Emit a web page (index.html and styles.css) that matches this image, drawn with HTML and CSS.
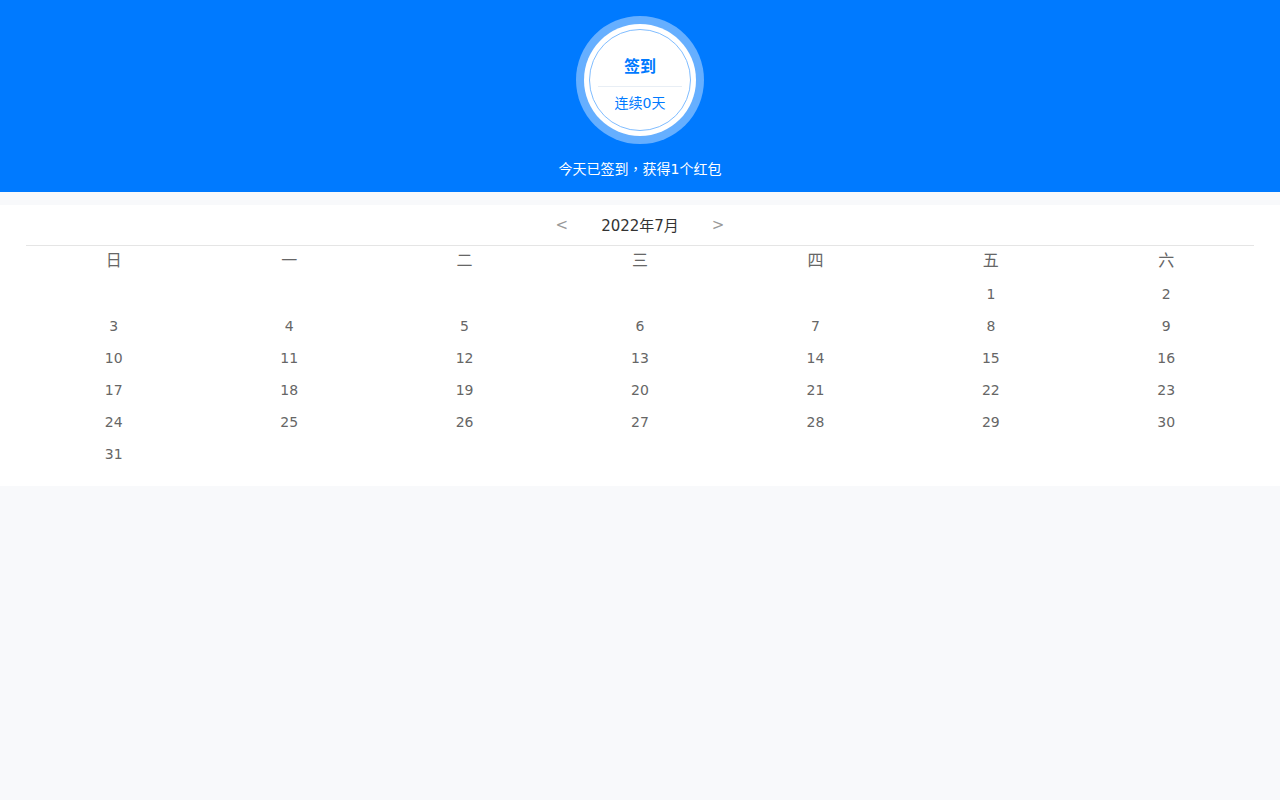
FILE: index.html
```html
<!DOCTYPE html>
<html lang="zh">
<head>
<meta charset="utf-8">
<title>签到</title>
<link rel="stylesheet" href="styles.css">
</head>
<body>
<header class="header">
  <div class="ring">
    <div class="disc">
      <div class="inner">
        <div class="sign-title">签到</div>
        <div class="divider"></div>
        <div class="streak">连续0天</div>
      </div>
    </div>
  </div>
  <div class="status" lang="zh-TW">今天已签到，获得1个红包</div>
</header>
<section class="card">
  <div class="nav">
    <span class="arrow">&lt;</span>
    <span class="month">2022年7月</span>
    <span class="arrow">&gt;</span>
  </div>
  <div class="grid weekdays">
    <div>日</div><div>一</div><div>二</div><div>三</div><div>四</div><div>五</div><div>六</div>
  </div>
  <div class="grid days">
    <div></div><div></div><div></div><div></div><div></div><div>1</div><div>2</div>
    <div>3</div><div>4</div><div>5</div><div>6</div><div>7</div><div>8</div><div>9</div>
    <div>10</div><div>11</div><div>12</div><div>13</div><div>14</div><div>15</div><div>16</div>
    <div>17</div><div>18</div><div>19</div><div>20</div><div>21</div><div>22</div><div>23</div>
    <div>24</div><div>25</div><div>26</div><div>27</div><div>28</div><div>29</div><div>30</div>
    <div>31</div><div></div><div></div><div></div><div></div><div></div><div></div>
  </div>
</section>
</body>
</html>
```
FILE: styles.css
```css
* { box-sizing: border-box; }
html, body {
  margin: 0;
  padding: 0;
  background: #f8f9fb;
  font-family: "DejaVu Sans", "Noto Sans CJK SC", sans-serif;
}
.header {
  background: #007aff;
  height: 192px;
  padding-top: 16px;
  display: flex;
  flex-direction: column;
  align-items: center;
}
.ring {
  width: 128px;
  height: 128px;
  border-radius: 50%;
  background: #66afff;
  padding: 8px;
}
.disc {
  width: 112px;
  height: 112px;
  border-radius: 50%;
  background: #fff;
  padding: 5px;
}
.inner {
  width: 102px;
  height: 102px;
  border-radius: 50%;
  border: 1px solid #80bdff;
  display: flex;
  flex-direction: column;
  align-items: center;
  padding-top: 23px;
}
.sign-title {
  color: #007aff;
  font-size: 16px;
  font-weight: bold;
  line-height: 24px;
  font-family: "Noto Sans CJK SC", sans-serif;
}
.divider {
  width: 84px;
  height: 1px;
  background: #e8eef5;
  margin-top: 9px;
}
.streak {
  color: #007aff;
  font-size: 14px;
  line-height: 20px;
  margin-top: 6px;
}
.status {
  color: #fff;
  font-size: 14px;
  line-height: 20px;
  margin-top: 15px;
  font-family: "DejaVu Sans", "Noto Sans CJK TC", sans-serif;
}
.card {
  background: #fff;
  margin-top: 13px;
  padding: 0 26px 16px;
}
.nav {
  height: 41px;
  border-bottom: 1px solid #e5e5e5;
  display: flex;
  justify-content: center;
  align-items: center;
  gap: 33px;
  padding-bottom: 1px;
}
.arrow {
  color: #999;
  font-size: 15px;
}
.month {
  color: #333;
  font-size: 15px;
}
.grid {
  display: grid;
  grid-template-columns: repeat(7, 1fr);
  text-align: center;
}
.weekdays div {
  height: 32px;
  line-height: 30px;
  font-size: 16px;
  color: #666;
}
.days div {
  height: 32px;
  line-height: 32px;
  font-size: 14px;
  color: #666;
}
```
